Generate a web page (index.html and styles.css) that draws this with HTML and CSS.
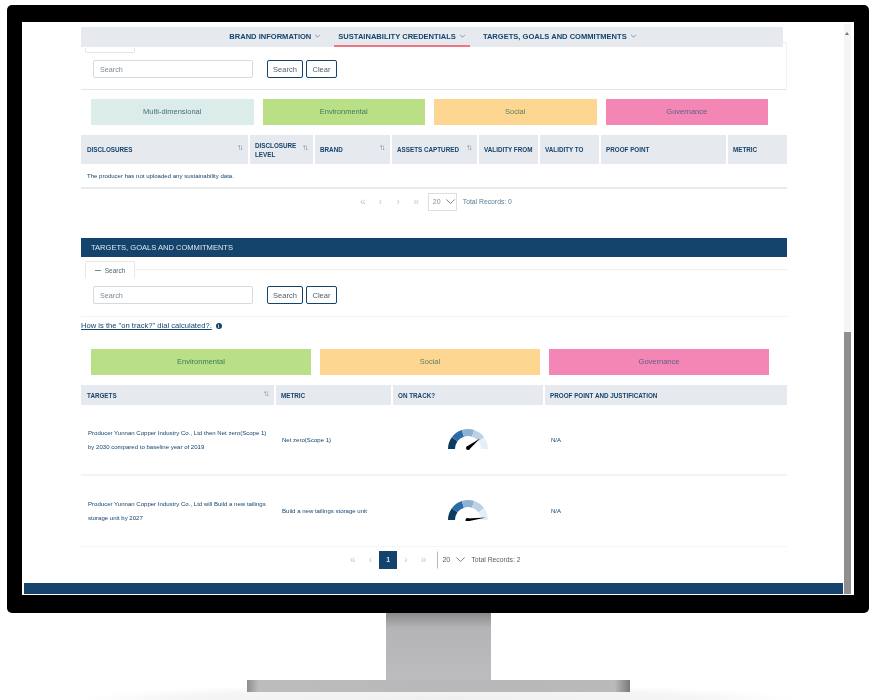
FILE: index.html
```html
<!DOCTYPE html>
<html lang="en">
<head>
  <meta charset="UTF-8">
  <title>Producer sustainability credentials</title>
  <link rel="stylesheet" href="styles.css">
</head>
<body>

  <div class="bezel">
    <div class="screen">
      <div class="page">
        <div class="content">

          <div class="nav">
            <a class="nav-item">BRAND INFORMATION <svg class="chevron" viewBox="0 0 8 5"><path d="M1 1l3 3 3-3"/></svg></a>
            <a class="nav-item active">SUSTAINABILITY CREDENTIALS <svg class="chevron" viewBox="0 0 8 5"><path d="M1 1l3 3 3-3"/></svg></a>
            <a class="nav-item">TARGETS, GOALS AND COMMITMENTS <svg class="chevron" viewBox="0 0 8 5"><path d="M1 1l3 3 3-3"/></svg></a>
          </div>

          <div class="panel panel-first">
            <div class="tab-stub"></div>
            <div class="search-row">
              <input class="search-input" placeholder="Search">
              <button class="btn btn-first">Search</button>
              <button class="btn">Clear</button>
            </div>
          </div>

          <div class="tiles">
            <div class="tile tile-multi">Multi-dimensional</div>
            <div class="tile tile-env">Environmental</div>
            <div class="tile tile-soc">Social</div>
            <div class="tile tile-gov">Governance</div>
          </div>

          <table class="data-table table-disclosures">
            <colgroup>
              <col class="w168"><col class="w65"><col class="w77"><col class="w87"><col class="w61"><col class="w61"><col class="w127"><col class="w60">
            </colgroup>
            <thead>
              <tr>
                <th><div class="th-inner">DISCLOSURES <span class="sort">↑↓</span></div></th>
                <th><div class="th-inner">DISCLOSURE LEVEL <span class="sort">↑↓</span></div></th>
                <th><div class="th-inner">BRAND <span class="sort">↑↓</span></div></th>
                <th><div class="th-inner">ASSETS CAPTURED <span class="sort">↑↓</span></div></th>
                <th>VALIDITY FROM</th>
                <th>VALIDITY TO</th>
                <th>PROOF POINT</th>
                <th>METRIC</th>
              </tr>
            </thead>
            <tbody>
              <tr><td class="empty" colspan="8">The producer has not uploaded any sustainability data.</td></tr>
            </tbody>
          </table>

          <div class="pager pager-first">
            <span class="pg">«</span><span class="pg">‹</span><span class="pg">›</span><span class="pg">»</span>
            <span class="per-page">20 <svg class="chevron chevron-big" viewBox="0 0 8 5"><path d="M1 1l3 3 3-3"/></svg></span>
            <span class="total total-zero">Total Records: 0</span>
          </div>

          <div class="band">TARGETS, GOALS AND COMMITMENTS</div>

          <div class="tab-row">
            <div class="tab"><span class="tab-dash"></span>Search</div>
            <div class="tab-line"></div>
          </div>
          <div class="panel">
            <div class="search-row">
              <input class="search-input" placeholder="Search">
              <button class="btn btn-first">Search</button>
              <button class="btn">Clear</button>
            </div>
          </div>

          <div class="dial-help">
            <a class="dial-link">How is the "on track?" dial calculated?.</a>
            <span class="info">i</span>
          </div>

          <div class="tiles tiles-three">
            <div class="tile tile-env">Environmental</div>
            <div class="tile tile-soc">Social</div>
            <div class="tile tile-gov">Governance</div>
          </div>

          <table class="data-table table-targets">
            <colgroup>
              <col class="w194"><col class="w117"><col class="w152"><col class="w243">
            </colgroup>
            <thead>
              <tr>
                <th><div class="th-inner">TARGETS <span class="sort">↑↓</span></div></th>
                <th>METRIC</th>
                <th>ON TRACK?</th>
                <th>PROOF POINT AND JUSTIFICATION</th>
              </tr>
            </thead>
            <tbody>
              <tr>
                <td class="target-cell">Producer Yunnan Copper Industry Co., Ltd then Net zero(Scope 1) by 2030 compared to baseline year of 2019</td>
                <td>Net zero(Scope 1)</td>
                <td class="gauge-cell">
                  <svg class="gauge" viewBox="0 0 42 22">
                    <path class="seg" stroke="#0d3a5f" d="M4.5 21A16.5 16.5 0 0 1 7.65 11.3"/>
                    <path class="seg" stroke="#2b6ca6" d="M7.65 11.3A16.5 16.5 0 0 1 15.9 5.31"/>
                    <path class="seg" stroke="#8db2d3" d="M15.9 5.31A16.5 16.5 0 0 1 26.1 5.31"/>
                    <path class="seg" stroke="#bcd1e5" d="M26.1 5.31A16.5 16.5 0 0 1 34.35 11.3"/>
                    <path class="seg" stroke="#e6eff6" d="M34.35 11.3A16.5 16.5 0 0 1 37.5 21"/>
                    <circle cx="21" cy="20" r="2"/>
                    <path d="M19.8 18.6L33 10.5 22.2 21.4z"/>
                  </svg>
                </td>
                <td>N/A</td>
              </tr>
              <tr>
                <td class="target-cell">Producer Yunnan Copper Industry Co., Ltd will Build a new tailings storage unit by 2027</td>
                <td>Build a new tailings storage unit</td>
                <td class="gauge-cell">
                  <svg class="gauge" viewBox="0 0 42 22">
                    <path class="seg" stroke="#0d3a5f" d="M4.5 21A16.5 16.5 0 0 1 7.65 11.3"/>
                    <path class="seg" stroke="#2b6ca6" d="M7.65 11.3A16.5 16.5 0 0 1 15.9 5.31"/>
                    <path class="seg" stroke="#8db2d3" d="M15.9 5.31A16.5 16.5 0 0 1 26.1 5.31"/>
                    <path class="seg" stroke="#bcd1e5" d="M26.1 5.31A16.5 16.5 0 0 1 34.35 11.3"/>
                    <path class="seg" stroke="#e6eff6" d="M34.35 11.3A16.5 16.5 0 0 1 37.5 21"/>
                    <circle cx="20.5" cy="21" r="2"/>
                    <path d="M20.5 19.6L39 18.6 20.5 22.4z"/>
                  </svg>
                </td>
                <td>N/A</td>
              </tr>
            </tbody>
          </table>

          <div class="pager pager-second">
            <span class="pg">«</span><span class="pg">‹</span><span class="pg pg-current">1</span><span class="pg">›</span><span class="pg">»</span>
            <span class="per-page per-page-second">20 <svg class="chevron chevron-big" viewBox="0 0 8 5"><path d="M1 1l3 3 3-3"/></svg></span>
            <span class="total total-second">Total Records: 2</span>
          </div>

        </div>
        <div class="footer"></div>
      </div>

      <div class="scrollbar">
        <div class="scroll-arrow"></div>
        <div class="scroll-thumb"></div>
      </div>
    </div>
  </div>

  <div class="stand"></div>
  <div class="base"></div>

</body>
</html>
```

FILE: styles.css
```css
* {
  box-sizing: border-box;
}

html, body {
  margin: 0;
  height: 700px;
  overflow: hidden;
}

body {
  font-family: "Liberation Sans", Arial, sans-serif;
  color: #14446c;
  display: flex;
  flex-direction: column;
  align-items: center;
  background: radial-gradient(ellipse 360px 16px at 50% 100%, #efefef, #f5f5f5 70%, #fff 100%);
}

/* monitor */
.bezel {
  align-self: flex-start;
  width: 862px;
  height: 608px;
  margin: 5px 0 0 7px;
  padding: 17px 15px 18px 15px;
  background: #000;
  border-radius: 5px;
}

.screen {
  display: flex;
  height: 573px;
  padding: 2px 3px 1px 2px;
  background: #fff;
  overflow: hidden;
  filter: blur(0.45px);
}

.stand {
  width: 105px;
  height: 67px;
  background: linear-gradient(#8a8a8c, #b4b4b6 22%, #bcbcbe 100%);
}

.base {
  width: 383px;
  height: 12px;
  background: linear-gradient(to right, #8d8d90, #bcbcbe 3%, #b9b7ba 50%, #b8babc 96%, #77797b);
}

.page {
  width: 821px;
}

.content {
  width: 706px;
  margin-left: 57px;
  padding-top: 3px;
}

.footer {
  height: 11px;
  margin-top: 14px;
  background: #14446c;
}

.scrollbar {
  width: 7px;
  margin-left: 1px;
  background: #f4f5f5;
  display: flex;
  flex-direction: column;
  justify-content: space-between;
}

.scroll-arrow {
  width: 0;
  height: 0;
  margin: 8px 0 0 1px;
  border-left: 2.5px solid transparent;
  border-right: 2.5px solid transparent;
  border-bottom: 3px solid #777;
}

.scroll-thumb {
  height: 262px;
  background: #8f8f8f;
}

/* sticky tab nav */
.nav {
  position: relative;
  z-index: 1;
  display: flex;
  justify-content: center;
  width: 702px;
  height: 20px;
  padding-left: 2px;
  background: #e6eaee;
}

.nav-item {
  display: flex;
  align-items: center;
  gap: 3px;
  padding: 0 5px;
  font-size: 7.55px;
  font-weight: bold;
  white-space: nowrap;
  border-bottom: 2px solid transparent;
}

.nav-item.active {
  margin: 0 8px;
  padding: 0 4px;
  border-bottom-color: #ee7583;
}

.chevron {
  width: 7px;
  height: 4px;
  fill: none;
  stroke: #6b7f90;
  stroke-width: 1;
}

.chevron-big {
  width: 11px;
  height: 7px;
  stroke-width: 0.7;
}

/* search panels */
.panel {
  padding-bottom: 12px;
  border-bottom: 1px solid #f0f1f2;
}

.panel-first {
  margin-top: -5px;
  padding-top: 5px;
  padding-bottom: 11px;
  border-top: 1px solid #f0f1f2;
  border-right: 1px solid #f0f1f2;
  border-bottom: 1px solid #e5e5e5;
}

.panel-first .search-row {
  margin-top: 7px;
}

.tab-stub {
  width: 50px;
  height: 5px;
  margin-left: 4px;
  border: 1px solid #e2e4e6;
  border-top: none;
  border-radius: 0 0 2px 2px;
}

.search-row {
  display: flex;
  margin-top: 8px;
  padding-left: 12px;
}

.search-input {
  width: 160px;
  height: 18px;
  padding: 0 6px;
  font: 7.2px "Liberation Sans", Arial, sans-serif;
  border: 1px solid #d3dae0;
  border-radius: 2px;
  background: #fff;
}

.search-input::placeholder {
  color: #7e8a94;
}

.btn {
  height: 18px;
  width: 31px;
  margin-left: 3px;
  padding: 0;
  font: 7.5px "Liberation Sans", Arial, sans-serif;
  color: #4d5f6e;
  background: #fff;
  border: 1px solid #14446c;
  border-radius: 2px;
}

.btn-first {
  width: 36px;
  margin-left: 14px;
}

.tab-row {
  display: flex;
  align-items: center;
  margin-top: 4px;
  padding-left: 4px;
}

.tab {
  display: flex;
  align-items: center;
  justify-content: center;
  gap: 4px;
  width: 50px;
  height: 17px;
  font-size: 6.5px;
  color: #55636f;
  border: 1px solid #e6e8ea;
  border-bottom: none;
  border-radius: 2px 2px 0 0;
}

.tab-dash {
  width: 6px;
  height: 1px;
  background: #7b8791;
}

.tab-line {
  flex: 1;
  height: 1px;
  background: #eceef0;
}

.dial-help {
  display: flex;
  align-items: center;
  gap: 4px;
  height: 9px;
  margin-top: 4px;
  font-size: 7.6px;
}

.dial-link {
  text-decoration: underline;
}

.info {
  width: 6px;
  height: 6px;
  border-radius: 50%;
  background: #14446c;
  color: #fff;
  font-size: 5px;
  font-weight: bold;
  line-height: 6px;
  text-align: center;
}

/* category tiles */
.tiles {
  display: grid;
  grid-template-columns: repeat(4, 162.5px);
  column-gap: 9px;
  margin-top: 9px;
  padding-left: 10px;
}

.tiles-three {
  grid-template-columns: repeat(3, 220px);
  margin-top: 19px;
}

.tile {
  height: 26px;
  line-height: 26px;
  text-align: center;
  font-size: 7.5px;
  color: #48707a;
}

.tile-multi { background: #dcecea; }
.tile-env { background: #b9e086; color: #3d7a5c; }
.tile-soc { background: #fdd792; color: #5d7d62; }
.tile-gov { background: #f386b5; color: #5f5f8a; }

/* tables */
.data-table {
  width: 706px;
  margin-top: 10px;
  table-layout: fixed;
  border-collapse: collapse;
}

.w168 { width: 168px; }
.w65 { width: 65px; }
.w77 { width: 77px; }
.w87 { width: 87px; }
.w61 { width: 61px; }
.w127 { width: 127px; }
.w60 { width: 60px; }
.w194 { width: 194px; }
.w117 { width: 117px; }
.w152 { width: 152px; }
.w243 { width: 243px; }

.data-table th {
  height: 29px;
  padding: 0 5px;
  font-size: 6.3px;
  font-weight: bold;
  line-height: 9px;
  text-align: left;
  background: #e6eaee;
  border-right: 2px solid #fff;
}

.data-table th:first-child {
  padding-left: 6px;
}

.data-table th:last-child {
  border-right: none;
}

.table-targets th {
  height: 20px;
}

.th-inner {
  display: flex;
  align-items: center;
  justify-content: space-between;
}

.sort {
  margin-top: -4px;
  font-size: 8px;
  font-weight: normal;
  letter-spacing: -1.5px;
  padding-right: 1px;
  color: #6d7f8e;
  white-space: nowrap;
}

.data-table td {
  font-size: 6.05px;
  padding: 0 7px;
}

.data-table td.empty {
  height: 24px;
  padding: 0 6px;
  border-bottom: 2px solid #e8e9ea;
}

.table-targets td {
  height: 70px;
  border-bottom: 2px solid #f2f3f4;
}

.table-targets tr:last-child td {
  height: 71px;
  border-bottom: 1px solid #f4f5f5;
}

.target-cell {
  line-height: 14px;
}

.data-table td.gauge-cell {
  padding: 0 0 2px 55px;
}

.gauge {
  display: block;
  width: 42px;
  height: 22px;
}

.seg {
  fill: none;
  stroke-width: 7;
}

/* pagination */
.pager {
  display: flex;
  align-items: center;
  margin-top: 4px;
  height: 18px;
  padding-left: 273px;
  font-size: 7px;
}

.pager-first {
  height: 17px;
}

.pager-second {
  padding-left: 263px;
}

.pg {
  width: 17.7px;
  height: 18px;
  line-height: 17px;
  text-align: center;
  font-size: 10px;
  color: #c4c8cc;
}

.pg-current {
  font-size: 7px;
  font-weight: bold;
  color: #dfe6ec;
  background: #14446c;
}

.per-page {
  display: flex;
  align-items: center;
  gap: 4px;
  width: 29px;
  height: 18px;
  margin-left: 3px;
  padding-left: 4px;
  font-size: 7px;
  color: #8b9299;
  border: 1px solid #dcdfe1;
}

.per-page-second {
  width: 34px;
  margin-left: 5px;
  gap: 5px;
  color: #555;
  border-color: #fff;
  border-left: 1px solid #b5b8ba;
}

.total {
  margin-left: 6px;
  font-size: 6.8px;
  color: #555f66;
}

.total-second {
  margin-left: 0;
}

.total-zero {
  color: #5b7d96;
}

.band {
  height: 19px;
  margin-top: 28px;
  padding-left: 10px;
  line-height: 19px;
  font-size: 7.55px;
  color: #dfe7ee;
  background: #14446c;
}
```
